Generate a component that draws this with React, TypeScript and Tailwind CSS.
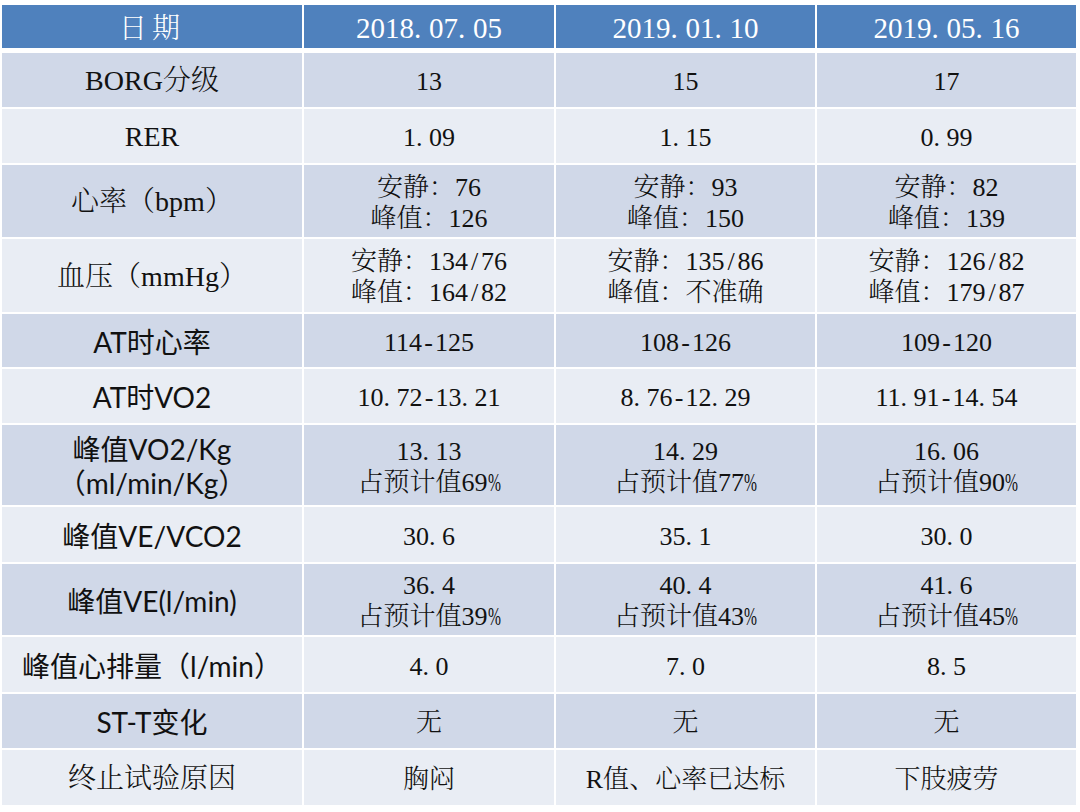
const serif = "font-['Liberation_Serif','Noto_Serif_CJK_SC','Noto_Sans_CJK_SC',serif]";
const sans = "font-['Lato','Noto_Sans_CJK_SC',sans-serif]";

type Row = {
  label: string[];
  sansLabel?: boolean;
  h: string;
  dark: boolean;
  cells: string[][];
};

const rows: Row[] = [
  { label: ["BORG分级"], h: "h-[54px]", dark: true, cells: [["13"], ["15"], ["17"]] },
  { label: ["RER"], h: "h-[54px]", dark: false, cells: [["1.09"], ["1.15"], ["0.99"]] },
  {
    label: ["心率（bpm）"],
    h: "h-[72px]",
    dark: true,
    cells: [
      ["安静：76", "峰值：126"],
      ["安静：93", "峰值：150"],
      ["安静：82", "峰值：139"],
    ],
  },
  {
    label: ["血压（mmHg）"],
    h: "h-[73px]",
    dark: false,
    cells: [
      ["安静：134/76", "峰值：164/82"],
      ["安静：135/86", "峰值：不准确"],
      ["安静：126/82", "峰值：179/87"],
    ],
  },
  { label: ["AT时心率"], sansLabel: true, h: "h-[53px]", dark: true, cells: [["114-125"], ["108-126"], ["109-120"]] },
  { label: ["AT时VO2"], sansLabel: true, h: "h-[54px]", dark: false, cells: [["10.72-13.21"], ["8.76-12.29"], ["11.91-14.54"]] },
  {
    label: ["峰值VO2/Kg", "（ml/min/Kg）"],
    sansLabel: true,
    h: "h-[80px]",
    dark: true,
    cells: [
      ["13.13", "占预计值69%"],
      ["14.29", "占预计值77%"],
      ["16.06", "占预计值90%"],
    ],
  },
  { label: ["峰值VE/VCO2"], sansLabel: true, h: "h-[55px]", dark: false, cells: [["30.6"], ["35.1"], ["30.0"]] },
  {
    label: ["峰值VE(l/min)"],
    sansLabel: true,
    h: "h-[71px]",
    dark: true,
    cells: [
      ["36.4", "占预计值39%"],
      ["40.4", "占预计值43%"],
      ["41.6", "占预计值45%"],
    ],
  },
  { label: ["峰值心排量（l/min）"], sansLabel: true, h: "h-[55px]", dark: false, cells: [["4.0"], ["7.0"], ["8.5"]] },
  { label: ["ST-T变化"], sansLabel: true, h: "h-[54px]", dark: true, cells: [["无"], ["无"], ["无"]] },
  { label: ["终止试验原因"], h: "h-[55px]", dark: false, cells: [["胸闷"], ["R值、心率已达标"], ["下肢疲劳"]] },
];

// SimSun-style half-width punctuation: . - / % get the same cell as a digit
function Sim({ text, big }: { text: string; big?: boolean }) {
  const w = big ? "w-[15px]" : "w-[13px]";
  return (
    <>
      {text.split("").map((ch, i) => {
        if (ch === ".") return <span key={i} className={`inline-block ${w} text-left`}>.</span>;
        if (ch === "-" || ch === "/")
          return <span key={i} className={`inline-block ${w} text-center`}>{ch}</span>;
        if (ch === "%")
          return (
            <span key={i} className="inline-block w-[13px]">
              <span className="inline-block scale-x-60 origin-left">%</span>
            </span>
          );
        return ch;
      })}
    </>
  );
}

const cols = "grid grid-cols-[300px_250px_259px_259px] gap-x-[2px]";

export default function App() {
  return (
    <div className="w-[1080px] h-[812px] bg-white pt-[5px] pl-[2px] text-[#111]">
      {/* header */}
      <div className={`${cols} h-[43px] mb-[5px] text-white ${serif}`}>
        <div className="bg-[#4f81bd] flex items-center justify-center pt-[4px] text-[28px] leading-none tracking-[5px] font-light">
          日期
        </div>
        {["2018.07.05", "2019.01.10", "2019.05.16"].map((d) => (
          <div key={d} className="bg-[#4f81bd] flex items-center justify-center pt-[4px] text-[29px] leading-none">
            <Sim text={d} big />
          </div>
        ))}
      </div>

      <div className="flex flex-col gap-y-[2px]">
        {rows.map((r, ri) => {
          const bg = r.dark ? "bg-[#d0d8e8]" : "bg-[#e9edf4]";
          return (
            <div key={ri} className={`${cols} ${r.h}`}>
              <div
                className={`${bg} flex flex-col items-center justify-center pt-[2px] text-[28px] leading-[34px] ${
                  r.sansLabel ? sans : `${serif} font-light`
                }`}
              >
                {r.label.map((l) => (
                  <span key={l} className="whitespace-nowrap">{l}</span>
                ))}
              </div>
              {r.cells.map((c, ci) => (
                <div
                  key={ci}
                  className={`${bg} flex flex-col items-center justify-center pt-[3px] text-[26px] leading-[31px] font-light ${serif}`}
                >
                  {c.map((line, li) => (
                    <span key={li} className="whitespace-nowrap">
                      <Sim text={line} />
                    </span>
                  ))}
                </div>
              ))}
            </div>
          );
        })}
      </div>
    </div>
  );
}
